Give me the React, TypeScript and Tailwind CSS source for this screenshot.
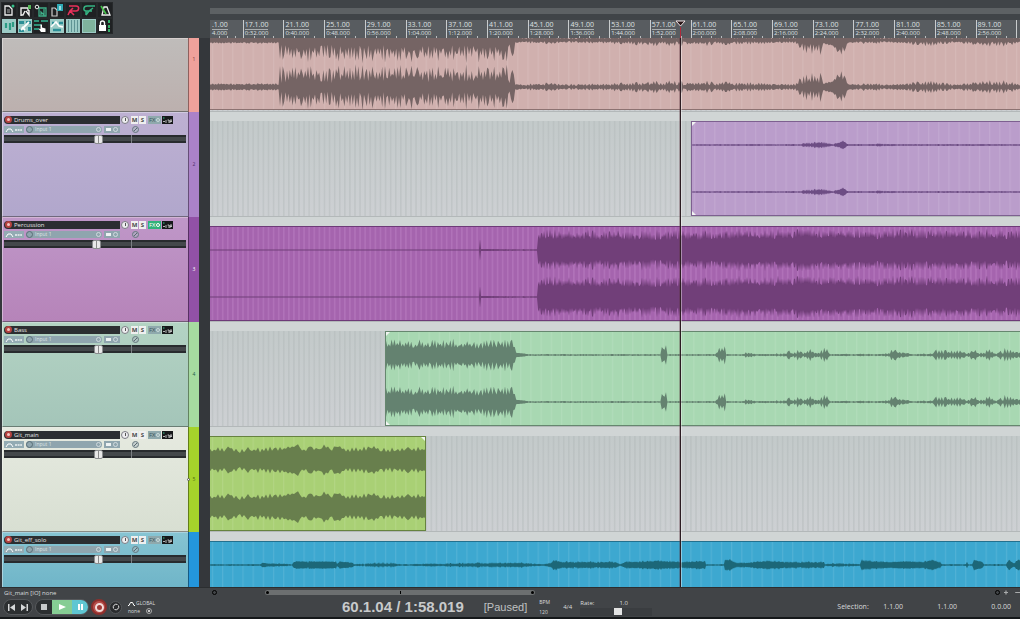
import React, { useState } from 'react';
import clsx from 'clsx';

type Point = [x: number, low: number, high: number];

interface Track {
  id: number;
  name: string;
  level: number;
  panel: string;
  strip: string;
  number: string;
  fxOn?: boolean;
  selected?: boolean;
  clip: string;
  wave: string;
  step: number;
  start: number;
  end?: number;
  points: Point[];
}

const TRACKS: Track[] = [
  {
    id: 1,
    name: 'Drums',
    level: 52,
    panel: 'from-[#bfbcba] to-[#bcb0ae]',
    strip: 'bg-[#efa19b]',
    number: 'text-[#7a3c3a]',
    clip: 'bg-[#d0b0ae] border-[#8c7271]',
    wave: '#756464',
    step: 1.4,
    start: 0,
    points: [
      [0, 2, 4], [69, 2, 4], [69, 4, 24], [303, 4, 24], [305, 2, 3], [315, 1, 3], [325, 1, 5], [350, 1, 4], [400, 1, 4],
      [430, 1, 7], [470, 1, 7], [500, 1, 7], [560, 1, 4], [585, 1, 4], [590, 2, 13], [612, 2, 17], [614, 3, 5], [622, 4, 6],
      [630, 8, 20], [634, 6, 16], [638, 2, 3], [660, 1, 5], [680, 1, 3], [720, 1, 7], [745, 1, 3], [770, 1, 7], [795, 1, 8], [810, 1, 3], [900, 1, 3],
    ],
  },
  {
    id: 2,
    name: 'Drums_over',
    level: 52,
    panel: 'from-[#bdb0d2] to-[#b1a7cc]',
    strip: 'bg-[#ab82c8]',
    number: 'text-[#4d2a68]',
    clip: 'bg-[#ba9dcb] border-[#7d6090]',
    wave: '#6d4d84',
    step: 1,
    start: 481,
    points: [
      [481, 0.5, 1], [560, 0.5, 1], [590, 0.5, 1], [592, 0.5, 3], [612, 1, 4], [622, 0.5, 1], [626, 1, 3], [632, 3, 5], [637, 0.5, 1],
      [660, 0.5, 1], [670, 0.5, 2], [685, 0.5, 1], [900, 0.5, 1],
    ],
  },
  {
    id: 3,
    name: 'Percussion',
    level: 51,
    panel: 'from-[#bf97c8] to-[#b684b9]',
    strip: 'bg-[#9251a6]',
    number: 'text-white',
    fxOn: true,
    clip: 'bg-[#a564ae] border-[#6e3a78]',
    wave: '#713f79',
    step: 1,
    start: 0,
    points: [[0, 0.5, 0.5], [269, 0.5, 0.5], [270, 10, 11], [271, 1, 1], [300, 0.5, 1], [328, 0.5, 1], [328, 10, 21], [450, 9, 21], [600, 11, 22], [900, 9, 21]],
  },
  {
    id: 4,
    name: 'Bass',
    level: 52,
    panel: 'from-[#b3d3c3] to-[#a4c5b9]',
    strip: 'bg-[#a6dba0]',
    number: 'text-[#245c48]',
    clip: 'bg-[#a8d8b2] border-[#66876f]',
    wave: '#648270',
    step: 1.4,
    start: 175,
    points: [
      [175, 6, 16], [303, 6, 17], [305, 2, 3], [318, 0.5, 1], [450, 0.5, 1], [451, 5, 12], [455, 5, 12], [456, 0.5, 1], [505, 0.5, 1],
      [507, 1, 10], [514, 1, 10], [515, 0.5, 1], [533, 0.5, 1], [534, 0.5, 3], [542, 0.5, 3], [544, 0.5, 1], [575, 0.5, 2], [578, 1, 6],
      [582, 0.5, 2], [588, 1, 7], [592, 0.5, 2], [598, 1, 8], [604, 0.5, 3], [616, 1, 9], [619, 0.5, 1], [678, 0.5, 2], [681, 2, 9], [690, 1, 5],
      [700, 0.5, 1], [722, 0.5, 2], [725, 0.5, 6], [752, 0.5, 6], [755, 0.5, 1], [763, 1, 8], [768, 0.5, 2], [778, 0.5, 7], [785, 0.5, 2], [795, 1, 8], [810, 0.5, 4], [900, 1, 4],
    ],
  },
  {
    id: 5,
    name: 'Git_main',
    level: 52,
    panel: 'from-[#e6eae0] to-[#d8dfd2]',
    strip: 'bg-[#a5d32b]',
    number: 'text-[#4d6a10]',
    selected: true,
    clip: 'bg-[#a9d075] border-[#66833f]',
    wave: '#687f4d',
    step: 2,
    start: 0,
    end: 216,
    points: [[0, 7, 14], [8, 9, 13], [13, 6, 13], [20, 11, 14], [27, 6, 13], [40, 8, 14], [54, 7, 13], [76, 10, 15], [88, 14, 16], [94, 6, 13], [100, 13, 15], [107, 6, 13], [114, 14, 16], [120, 6, 13], [127, 13, 15], [138, 7, 13], [156, 8, 14], [165, 11, 15], [175, 6, 14], [190, 8, 14], [202, 7, 15], [216, 9, 13]],
  },
  {
    id: 6,
    name: 'Git_eff_solo',
    level: 52,
    panel: 'from-[#86c4d2] to-[#6fb5c8]',
    strip: 'bg-[#2396dd]',
    number: 'text-white',
    clip: 'bg-[#3da8d0] border-[#23708e]',
    wave: '#1c6778',
    step: 1,
    start: 0,
    points: [
      [0, 0.5, 1], [50, 0.5, 1], [53, 2, 3], [60, 0.5, 2], [66, 1, 2], [82, 0.5, 1], [85, 3, 4], [97, 3, 4], [98, 2, 2], [99, 3, 4],
      [126, 3, 4], [127, 1, 1], [130, 3, 4], [142, 2, 3], [144, 0.5, 1], [165, 0.5, 3], [182, 0.5, 3], [190, 0.5, 1], [270, 0.5, 3], [285, 1, 3],
      [310, 1, 3], [334, 0.5, 1], [341, 1, 4], [345, 3, 6], [352, 2, 4], [378, 2, 4], [406, 2, 4], [410, 0.5, 1], [416, 2, 4], [450, 3, 5],
      [472, 2, 4], [495, 3, 5], [496, 0.5, 1], [514, 0.5, 1], [515, 4, 6], [521, 4, 6], [526, 1, 3], [540, 2, 3], [555, 3, 5], [580, 2, 4],
      [614, 2, 4], [615, 0.5, 1], [626, 0.5, 3], [642, 0.5, 2], [650, 0.5, 1], [651, 3, 6], [680, 2, 4], [700, 3, 4], [712, 2, 4], [722, 4, 6],
      [730, 2, 4], [732, 0.5, 1], [756, 0.5, 1], [757, 3, 7], [758, 0.5, 1], [762, 0.5, 1], [764, 4, 6], [772, 3, 4], [774, 0.5, 1],
      [796, 0.5, 1], [799, 4, 6], [804, 1, 2], [807, 4, 6], [900, 2, 5],
    ],
  },
];

// small deterministic generator, so a track always gets the same wave form
const makeRandom = (seed: number) => {
  let s = seed * 7919 + 17;
  return () => {
    s = (s * 16807) % 2147483647;
    return s / 2147483647;
  };
};

const levelAt = (points: Point[], x: number, r: number) => {
  let i = 0;
  while (i < points.length - 2 && points[i + 1][0] <= x) i++;
  const [x0, lo0, hi0] = points[i];
  const [x1, lo1, hi1] = points[i + 1];
  const t = x1 === x0 ? 0 : Math.min(1, Math.max(0, (x - x0) / (x1 - x0)));
  const lo = lo0 + (lo1 - lo0) * t;
  const hi = hi0 + (hi1 - hi0) * t;
  return lo + (hi - lo) * r;
};

// peaks and dips take turns, and are nearly the same above and below the axis
const wavePath = (track: Track, center: number) => {
  const random = makeRandom(track.id);
  const last = track.end ?? 2000;
  const top: string[] = [];
  const bottom: string[] = [];
  let peak = false;
  for (let x = track.start; x <= last; x += track.step) {
    peak = random() > 0.15 ? !peak : peak;
    const base = random();
    const shape = () => {
      const r = base * 0.8 + random() * 0.2;
      return peak ? 0.35 + r * 0.65 : r * 0.4;
    };
    const left = (x - track.start).toFixed(1);
    top.push(`${left} ${(center - levelAt(track.points, x, shape())).toFixed(1)}`);
    bottom.unshift(`${left} ${(center + levelAt(track.points, x, shape())).toFixed(1)}`);
  }
  return `M${top.join('L')}L${bottom.join('L')}Z`;
};

const CLIP_START: Record<number, string> = {
  0: 'ml-0',
  175: 'ml-[175px]',
  481: 'ml-[481px]',
};

const Clip: React.FC<{ track: Track }> = ({ track }) => {
  const first = track.id === 1;
  return (
    <div
      className={clsx(
        'overflow-hidden border-y',
        track.clip,
        CLIP_START[track.start],
        track.end ? 'w-[216px] border-r' : 'flex-1',
        track.start > 0 && 'border-l',
        first ? 'h-[72px] border-t-0' : 'mt-[9px] h-[95px]',
      )}
    >
      <svg className="block h-full w-full" aria-hidden="true">
        <rect width="100%" height="100%" fill={`url(#${track.id === 3 ? 'gridStrong' : 'gridLight'})`} />
        <g transform={first ? 'translate(0 -22)' : 'translate(0 -1)'} fill={track.wave}>
          <path d={wavePath(track, 24)} />
          <path d={wavePath(track, 71)} />
        </g>
        {track.start > 0 && <path d="M0 0h4L0 4zM0 93v-4l4 4z" fill="#f2f5f2" />}
        {track.end && <path d="M215 0h-4l4 4z" fill="#f2f5f2" />}
      </svg>
    </div>
  );
};

const TrackPanel: React.FC<{ track: Track }> = ({ track }) => {
  const [level, setLevel] = useState(track.level);
  return (
    <div className="flex w-[210px] shrink-0 bg-[#34373b] pl-[2px]">
      <div className={clsx('min-w-0 flex-1 border-t border-l border-t-white/40 border-l-white/40 bg-linear-to-b px-px pt-[2px]', track.panel, track.id < 6 && 'border-b border-b-black/40')}>
        {track.id > 1 && (
          <>
            <div className="flex h-[9px] items-center">
              <div className="flex h-2 w-[116px] items-center gap-[2px] rounded-l-full bg-[#2b2e31] pl-px">
                <button aria-label={`Arm ${track.name}`} className="flex size-[7px] items-center justify-center rounded-full bg-[#b5423f]">
                  <span className="size-[3px] rounded-full bg-[#f3c3c0]" />
                </button>
                <span className="text-[6px] leading-[8px] text-[#e4e4e4]">{track.name}</span>
              </div>
              <button aria-label="Phase" className="ml-px flex size-2 items-center justify-center rounded-full border border-[#7d7d85] bg-[#eeeef0]">
                <span className="h-[3px] w-px bg-[#555]" />
              </button>
              <button className="ml-[2px] h-2 w-[7px] bg-[#efefef] text-[6px] leading-[8px] font-bold text-[#4a4a4a]">M</button>
              <button className="ml-px h-2 w-[7px] bg-[#efefef] text-[6px] leading-[8px] font-bold text-[#4a4a4a]">S</button>
              <button
                className={clsx(
                  'ml-[2px] flex h-2 w-[13px] items-center justify-between px-px text-[6px] leading-[8px]',
                  track.fxOn ? 'bg-[#2fb27a] text-white' : 'bg-[#8fa9ad] text-[#3e5559]',
                )}
              >
                FX
                <span className={clsx('size-1 rounded-full border', track.fxOn ? 'border-white' : 'border-[#c9dadb]')} />
              </button>
              <button aria-label="Trim" className="ml-px flex h-2 w-[11px] items-end bg-[#17191b] p-px">
                <svg viewBox="0 0 9 6" className="h-[6px] w-[9px]" aria-hidden="true">
                  <path d="M0 1h1.500" stroke="#39c48a" />
                  <path d="M0 4.500h2M3 3v3M4.500 3h1.500v3M7 6V3h2v1.500H7" stroke="#ddd" strokeWidth=".8" fill="none" />
                </svg>
              </button>
            </div>
            <div className="mt-px flex h-[9px] items-center">
              <button aria-label="Envelope" className="flex h-[7px] w-5 items-center bg-[#93abb3] pl-px">
                <svg viewBox="0 0 18 6" className="h-[6px] w-[18px]" aria-hidden="true">
                  <path d="M1 5l2-3h3l2 3" stroke="#fff" fill="none" />
                  <path d="M10 3h7" stroke="#d5dfe2" strokeWidth="2" strokeDasharray="2 .6" />
                </svg>
              </button>
              <button className="ml-[2px] flex h-[7px] w-[76px] items-center rounded-full bg-[#8fa5ae] text-[5px] leading-[7px] text-[#dbe4e7]">
                <span className="mr-[2px] size-[7px] rounded-full border border-[#596f78]" />
                Input 1
                <span className="mr-px ml-auto size-[5px] rounded-full border border-[#d0dade]" />
              </button>
              <button aria-label="Input monitor" className="ml-[2px] flex h-[7px] w-4 items-center justify-between bg-[#8fa5ae] px-[2px]">
                <span className="h-[3px] w-[5px] bg-[#eef2f3]" />
                <span className="size-[5px] rounded-full border border-[#d0dade]" />
              </button>
              <button aria-label="Pan" className="ml-3 size-[7px] rounded-full border border-[#66777e] bg-[#a9b7bf]/50">
                <svg viewBox="0 0 5 5" className="block size-[5px]" aria-hidden="true">
                  <path d="M1 4l3-3" stroke="#5a696f" />
                </svg>
              </button>
            </div>
            <input
              type="range"
              aria-label={`${track.name} volume`}
              value={level}
              onChange={(e) => setLevel(Number(e.target.value))}
              className="mt-px block h-2 w-[182px] appearance-none bg-[linear-gradient(90deg,transparent_127px,#7b7f83_127px,#7b7f83_128px,transparent_128px),linear-gradient(#282b2e_2px,#44484b_2px,#44484b_6px,#282b2e_6px)] [&::-webkit-slider-thumb]:h-[9px] [&::-webkit-slider-thumb]:w-[9px] [&::-webkit-slider-thumb]:appearance-none [&::-webkit-slider-thumb]:rounded-[2px] [&::-webkit-slider-thumb]:border [&::-webkit-slider-thumb]:border-[#8b8d8f] [&::-webkit-slider-thumb]:bg-[linear-gradient(90deg,#e8e8e8_3px,#8a8a8a_3px,#8a8a8a_4px,#e8e8e8_4px)]"
            />
          </>
        )}
      </div>
      <div
        className={clsx(
          'relative mr-[11px] flex w-[11px] justify-center border-l border-black/40 text-[5px] leading-[7px]',
          track.id === 1 ? 'items-start pt-[18px]' : 'items-center',
          track.strip,
          track.number,
        )}
      >
        {track.selected && <span className="absolute -left-[2px] size-[3px] rounded-full border border-[#555] bg-white" />}
        {track.id < 6 && track.id}
      </div>
    </div>
  );
};

const TrackRow: React.FC<{ track: Track }> = ({ track }) => (
  <section
    aria-label={track.name}
    className={clsx(
      'flex overflow-hidden',
      track.id === 1 && 'h-[74px] shrink-0',
      track.id > 1 && track.id < 6 && 'h-[105px] shrink-0',
      track.id === 6 && 'min-h-0 flex-1',
    )}
  >
    <TrackPanel track={track} />
    <div className={clsx('grid min-w-0 flex-1 overflow-hidden bg-linear-to-b from-[#c2c9c9] to-[#cdd0d3]', track.id < 6 && 'border-b border-[#b3b8b9]')}>
      <svg className="col-start-1 row-start-1 block h-full w-full" aria-hidden="true">
        <rect y="9" width="100%" height="95" fill="url(#gridDark)" />
        <rect width="100%" height="9" fill="#d0d5d5" />
      </svg>
      <div className="col-start-1 row-start-1 flex min-w-0 items-start overflow-hidden">
        <Clip track={track} />
      </div>
    </div>
  </section>
);

const doc = 'M4 4h4l3 3v6H4z';

const TOOLS: { label: string; on?: boolean; art: React.ReactNode }[] = [
  { label: 'New project', art: <><path d={doc} stroke="#eee" fill="none" strokeWidth="1.300" /><path d="M6 8h3M6 10h3" stroke="#aaa" /><circle cx="12" cy="4" r="1.500" fill="#35c28b" /></> },
  { label: 'Open project', art: <><path d="M4 14V6h7v3M4 13h2l2-4M9 9l3 4V8" stroke="#eee" fill="none" strokeWidth="1.400" /><rect x="11" y="3" width="3" height="4" fill="#56b85a" /></> },
  { label: 'Save project', art: <><path d="M6 6h7v8H6zM8 13v-3l3 3V7" stroke="#3fae88" fill="none" strokeWidth="1.300" /><circle cx="4" cy="5" r="1.800" stroke="#eee" fill="none" /></> },
  { label: 'Project settings', art: <><path d="M3 6h3l2 2v6H3z" stroke="#ccc" fill="none" strokeWidth="1.200" /><rect x="8" y="2" width="6" height="7" fill="#2fa9b4" /><path d="M11 4v4" stroke="#e8ffff" strokeWidth="1.200" /></> },
  { label: 'Undo', art: <path d="M4 4h7c4 0 3 5 0 5H5M8 6L5 9l-2 4M5 9l4 4" stroke="#e8315b" fill="none" strokeWidth="1.600" /> },
  { label: 'Redo', art: <path d="M14 4H6C2 4 2 9 5 9h6M12 6l-4 3-3 4M5 9l0 4" stroke="#35b382" fill="none" strokeWidth="1.500" /> },
  { label: 'Metronome', art: <><path d="M5 13L7 5h3l3 8z" stroke="#eee" fill="none" strokeWidth="1.300" /><path d="M4 4l5 8" stroke="#46c24a" strokeWidth="1.600" /></> },
  { label: 'Auto crossfade', on: true, art: <path d="M5 5v5M9 5v7M12 4v5" stroke="#2c9c84" strokeWidth="2.200" /> },
  { label: 'Item grouping', on: true, art: <><path d="M2 3h5v3H2zM9 3h5v3H9zM2 11h5v3H2zM11 9h3v4h-3z" fill="#2c8f96" /><path d="M4 12l8-8M5 9l3 3" stroke="#fff" strokeWidth="1.800" /></> },
  { label: 'Ripple editing', art: <><path d="M1 3h5M8 3h7M1 7h7M1 11h5" stroke="#2e8f77" strokeWidth="2" /><path d="M8 14L5.500 10.500 7.500 11V6.500h1.500V9.500l3.500 1v3.500z" fill="#fff" /></> },
  { label: 'Envelope points', on: true, art: <><path d="M3 5h2M10 5h4M4 12h8" stroke="#2c9098" strokeWidth="2.500" /><path d="M2 9l5-5 3 4 4 1" stroke="#fff" fill="none" strokeWidth="1.500" /></> },
  { label: 'Grid lines', on: true, art: <path d="M3.500 2v12M6.500 2v12M9.500 2v12M12.500 2v12" stroke="#5f9494" /> },
  { label: 'Snapping', on: true, art: <path d="M2 2h12v12H2z" fill="#7fb39c" /> },
  { label: 'Lock', art: <><path d="M2 7h7v6H2z" fill="#fff" /><path d="M3.500 7V5a2 2 0 014 0v2" stroke="#fff" fill="none" strokeWidth="1.400" /><path d="M12 2v3M12 7v3M12 11v3" stroke="#35b36a" strokeWidth="2" /></> },
];

const Toolbar: React.FC = () => (
  <div className="w-[210px] shrink-0 pt-[2px] pl-px">
    <div className="grid w-28 grid-cols-7">
      {TOOLS.map((tool) => (
        <button key={tool.label} aria-label={tool.label} className={clsx('size-4 border border-[#26292b]', tool.on ? 'bg-[#9ccbc6]' : 'bg-[#1f2123]')}>
          <svg viewBox="1 1 14 14" className="block size-full" aria-hidden="true">{tool.art}</svg>
        </button>
      ))}
    </div>
  </div>
);

// the view is scrolled, so the first mark keeps only the end of its labels
const rulerLabels = (i: number) => {
  if (i === 0) return ['.1.00', '4.000'];
  const seconds = 24 + i * 8;
  return [`${13 + i * 4}.1.00`, `${Math.floor(seconds / 60)}:${String(seconds % 60).padStart(2, '0')}.000`];
};

const Ruler: React.FC = () => (
  <div className="relative min-w-0 flex-1 overflow-hidden">
    <div className="h-2 bg-[#404448]" />
    <div className="h-[6px] bg-[#5d6164]" />
    <div className="h-[6px] bg-[#404448]" />
    <div className="-mr-[37px] -ml-2 grid h-[18px] grid-cols-21 bg-[#585c60]">
      {Array.from({ length: 21 }, (_, i) => {
        const [bar, time] = rulerLabels(i);
        return (
          <div key={i} className={clsx('flex flex-col border-l border-[#c9cccd] text-[#dfe1e2]', i === 0 ? 'pl-[9px]' : 'pl-px')}>
            {i < 20 && (
              <>
                <span className="mt-px self-start border-b border-[#a9adaf] text-[7px] leading-[8px]">{bar}</span>
                <span className="text-[6px] leading-[7px]">{time}</span>
                <span className="-mt-px flex justify-evenly">
                  <i className="h-[2px] w-px bg-[#b9bcbe]" />
                  <i className="h-[2px] w-px bg-[#b9bcbe]" />
                  <i className="h-[2px] w-px bg-[#b9bcbe]" />
                </span>
              </>
            )}
          </div>
        );
      })}
    </div>
  </div>
);

const Transport: React.FC = () => {
  const [rate, setRate] = useState(52);
  return (
    <footer className="shrink-0 border-t border-b-2 border-t-[#2b2e30] border-b-[#15181a] bg-[#414447] text-[#d9dbdc]">
      <div className="flex h-[9px] items-center">
        <span className="w-[210px] pl-1 text-[6px] leading-[8px]">Git_main [IO] none</span>
        <span className="ml-[2px] size-[5px] rounded-full border border-black" />
        <div className="ml-12 flex h-[5px] w-[270px] items-center justify-between rounded-full bg-[#6c6f70] px-px">
          <span className="size-[3px] rounded-full bg-black" />
          <span className="h-[3px] w-px bg-black" />
          <span className="size-[3px] rounded-full bg-black" />
        </div>
        <span className="ml-auto size-[5px] rounded-full border border-black" />
        <svg viewBox="0 0 20 7" className="ml-1 h-[7px] w-4" aria-hidden="true">
          <path d="M0 3.500h5M2.500 1v5M14 3.500h6" stroke="#a9abac" strokeWidth="1.500" />
        </svg>
      </div>
      <div className="flex h-5 items-center pl-[3px]">
        <div className="flex h-4 w-[30px] items-center justify-around rounded-full border border-[#55585b] bg-[#2c2f31] px-[2px]">
          <button aria-label="Go to start">
            <svg viewBox="0 0 8 7" className="h-[7px] w-2" aria-hidden="true"><path d="M0 0h1.500v7H0zM7 0v7L2 3.500z" fill="#d5d7d8" /></svg>
          </button>
          <button aria-label="Go to end">
            <svg viewBox="0 0 8 7" className="h-[7px] w-2" aria-hidden="true"><path d="M6.500 0H8v7H6.500zM1 0v7l5-3.500z" fill="#d5d7d8" /></svg>
          </button>
        </div>
        <div className="ml-[2px] flex h-4 overflow-hidden rounded-full border border-[#55585b]">
          <button aria-label="Stop" className="flex w-4 items-center justify-center bg-[#2c2f31]"><span className="size-[6px] bg-[#c6c8c9]" /></button>
          <button aria-label="Play" className="flex w-5 items-center justify-center bg-[#86cd94]">
            <svg viewBox="0 0 7 6" className="h-[6px] w-[7px]" aria-hidden="true"><path d="M0 0v6l7-3z" fill="#fff" /></svg>
          </button>
          <button aria-label="Pause" className="flex w-4 items-center justify-center gap-px bg-[#5fc6d2]">
            <span className="h-[6px] w-[2px] bg-white" />
            <span className="h-[6px] w-[2px] bg-white" />
          </button>
        </div>
        <button aria-label="Record" className="ml-[2px] flex size-4 items-center justify-center rounded-full border-2 border-[#8e2f2c] bg-[#b8504b]">
          <span className="flex size-[9px] items-center justify-center rounded-full border-2 border-[#f2dddb] bg-[#a23a36]" />
        </button>
        <button aria-label="Repeat" className="ml-[2px] flex size-[13px] items-center justify-center rounded-full border border-[#55585b] bg-[#2a2c2e]">
          <svg viewBox="0 0 8 8" className="size-2" aria-hidden="true"><path d="M1.500 5.500A3 3 0 015.500 1.500M6.500 2.500A3 3 0 012.500 6.500" stroke="#ddd" fill="none" /></svg>
        </button>
        <div className="ml-[6px] w-7 text-[5px] leading-[8px]">
          <div className="flex items-center gap-px">
            <svg viewBox="0 0 7 5" className="h-[5px] w-[7px]" aria-hidden="true"><path d="M0 4.500h1l1.500-3h2l1.500 3h1" stroke="#fff" fill="none" /></svg>
            GLOBAL
          </div>
          <div className="flex items-center justify-between">
            none
            <span className="mr-1 flex size-[6px] items-center justify-center rounded-full border border-[#aaa]"><i className="size-[2px] bg-[#ccc]" /></span>
          </div>
        </div>
        <div className="ml-[186px] font-['Liberation_Sans',Arial,sans-serif] text-[15px] leading-5 font-bold whitespace-nowrap text-[#c8cacb]">60.1.04 / 1:58.019</div>
        <div className="ml-5 font-['Liberation_Sans',Arial,sans-serif] text-[11px] leading-5 text-[#c0c2c3]">[Paused]</div>
        <div className="ml-3 flex w-4 flex-col text-[5px] leading-[10px]"><span>BPM</span><span>120</span></div>
        <div className="ml-2 text-[6px]">4/4</div>
        <div className="ml-2 w-[72px] text-[6px]">
          <div className="flex h-[9px] items-center gap-[25px]">
            <label htmlFor="rate">Rate:</label>
            <span>1.0</span>
          </div>
          <input
            id="rate"
            type="range"
            value={rate}
            onChange={(e) => setRate(Number(e.target.value))}
            className="block h-2 w-full appearance-none bg-[#3a3d40] [&::-webkit-slider-thumb]:h-[7px] [&::-webkit-slider-thumb]:w-2 [&::-webkit-slider-thumb]:appearance-none [&::-webkit-slider-thumb]:bg-[#e2e3e3]"
          />
        </div>
        <div className="mr-[9px] ml-auto flex text-[7px]">
          <span className="w-[46px]">Selection:</span>
          <span className="w-[54px]">1.1.00</span>
          <span className="w-[54px]">1.1.00</span>
          <span>0.0.00</span>
        </div>
      </div>
    </footer>
  );
};

const App: React.FC = () => (
  <div className="flex h-screen w-full flex-col overflow-hidden bg-[#414548] font-['Open_Sans','Noto_Sans',sans-serif]">
    {/* Shared grid patterns: one line every half bar */}
    <svg className="absolute size-0" aria-hidden="true">
      <defs>
        <pattern id="gridDark" width="5.090" height="10" patternUnits="userSpaceOnUse"><path d="M2.500 0v10" stroke="#adb4b5" strokeOpacity=".6" /></pattern>
        <pattern id="gridLight" width="10.180" height="10" patternUnits="userSpaceOnUse"><path d="M2.500 0v10" stroke="#fff" strokeOpacity=".12" /></pattern>
        <pattern id="gridStrong" width="5.090" height="10" patternUnits="userSpaceOnUse"><path d="M2.500 0v10" stroke="#cf9bd6" strokeOpacity=".4" /></pattern>
      </defs>
    </svg>
    <main className="relative flex min-h-0 flex-1 flex-col">
      <div className="flex h-[38px] shrink-0">
        <Toolbar />
        <Ruler />
      </div>
      {TRACKS.map((track) => (
        <TrackRow key={track.id} track={track} />
      ))}
      {/* Playhead */}
      <div className="pointer-events-none absolute top-5 bottom-0 left-[675px] flex w-[11px] flex-col items-center">
        <svg viewBox="0 0 11 7" className="h-[7px] w-[11px] shrink-0" aria-hidden="true">
          <path d="M1 1h9L5.500 6z" fill="#2a1618" stroke="#f2e6e6" />
        </svg>
        <div className="h-[11px] w-px bg-[#b02a3c]" />
        <div className="w-px flex-1 bg-[#2c1c22] shadow-[1px_0_0_rgba(255,255,255,0.4),-1px_0_0_rgba(90,50,60,0.35)]" />
      </div>
    </main>
    <Transport />
  </div>
);

export default App;
